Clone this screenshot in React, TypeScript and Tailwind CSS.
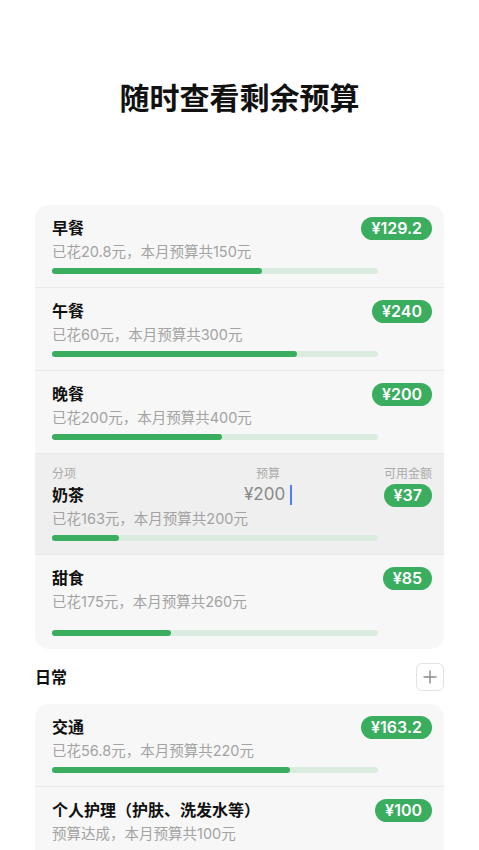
import React from "react";

type Item = {
  name: string;
  desc: string;
  left: string;
  fill: number; // px of a 326px track
  editing?: boolean;
  budget?: string;
  tall?: boolean;
};

const food: Item[] = [
  { name: "早餐", desc: "已花20.8元，本月预算共150元", left: "¥129.2", fill: 210 },
  { name: "午餐", desc: "已花60元，本月预算共300元", left: "¥240", fill: 245 },
  { name: "晚餐", desc: "已花200元，本月预算共400元", left: "¥200", fill: 170 },
  { name: "奶茶", desc: "已花163元，本月预算共200元", left: "¥37", fill: 67, editing: true, budget: "¥200" },
  { name: "甜食", desc: "已花175元，本月预算共260元", left: "¥85", fill: 119, tall: true },
];

const daily: Item[] = [
  { name: "交通", desc: "已花56.8元，本月预算共220元", left: "¥163.2", fill: 238 },
  { name: "个人护理（护肤、洗发水等）", desc: "预算达成，本月预算共100元", left: "¥100", fill: 326 },
];

function Badge({ value }: { value: string }) {
  return (
    <span className="h-[23px] px-[10px] rounded-full bg-[#3aad5f] text-white text-[16px] leading-[23px] font-semibold">
      {value}
    </span>
  );
}

function Bar({ fill }: { fill: number }) {
  return (
    <div className="w-[326px] h-[6px] rounded-full bg-[#d9ecdf]">
      <div className="h-full rounded-full bg-[#3aad5f]" style={{ width: fill }} />
    </div>
  );
}

function Row({ item, last }: { item: Item; last: boolean }) {
  if (item.editing) {
    return (
      <div className="bg-[#efefef] pl-[17px] pr-[12px] pt-[12px] pb-[13px] border-b border-[#e9e9e9]">
        <div className="flex items-center text-[12px] leading-[16px] text-[#aaaaaa]">
          <span className="w-[192px]">分项</span>
          <span className="w-[48px] text-center">预算</span>
          <span className="flex-1 text-right">可用金额</span>
        </div>
        <div className="flex items-center h-[24px] mt-[1px]">
          <span className="w-[192px] text-[16px] font-semibold text-[#111]">{item.name}</span>
          <span className="flex items-center text-[17px] text-[#8a8a8a]">
            {item.budget}
            <span className="ml-[5px] w-[2px] h-[20px] bg-[#4f7fe6]" />
          </span>
          <span className="flex-1 flex justify-end">
            <Badge value={item.left} />
          </span>
        </div>
        <div className="text-[14.5px] leading-[20px] text-[#a3a3a3] mt-[2px]">{item.desc}</div>
        <div className="mt-[6px]">
          <Bar fill={item.fill} />
        </div>
      </div>
    );
  }
  return (
    <div className={"pl-[17px] pr-[12px] pt-[11px] pb-[13px]" + (last ? "" : " border-b border-[#e9e9e9]")}>
      <div className="flex items-center justify-between h-[24px]">
        <span className="text-[16px] font-semibold text-[#111]">{item.name}</span>
        <Badge value={item.left} />
      </div>
      <div className="text-[14.5px] leading-[20px] text-[#a3a3a3] mt-[2px]">{item.desc}</div>
      <div className={item.tall ? "mt-[18px]" : "mt-[6px]"}>
        <Bar fill={item.fill} />
      </div>
    </div>
  );
}

function Card({ items }: { items: Item[] }) {
  return (
    <div className="mx-[35px] rounded-[14px] bg-[#f7f7f7] overflow-hidden">
      {items.map((it, i) => (
        <Row key={it.name} item={it} last={i === items.length - 1} />
      ))}
    </div>
  );
}

export default function App() {
  return (
    <div
      className="w-[479px] h-[850px] overflow-hidden bg-white"
      style={{ fontFamily: 'Inter, "Noto Sans CJK SC", sans-serif' }}
    >
      <h1 className="pt-[78px] text-center text-[30px] leading-[40px] font-semibold text-[#111]">
        随时查看剩余预算
      </h1>

      <div className="mt-[87px]">
        <Card items={food} />
      </div>

      <div className="mx-[35px] mt-[14px] mb-[13px] flex items-center justify-between">
        <span className="text-[16px] font-semibold text-[#111]">日常</span>
        <button className="w-[28px] h-[28px] rounded-[6px] border border-[#e3e3e3] bg-white flex items-center justify-center">
          <svg width="14" height="14" viewBox="0 0 14 14" fill="none" stroke="#8a8a8a" strokeWidth="1.4">
            <path d="M7 0.5v13M0.5 7h13" />
          </svg>
        </button>
      </div>

      <Card items={daily} />
    </div>
  );
}
